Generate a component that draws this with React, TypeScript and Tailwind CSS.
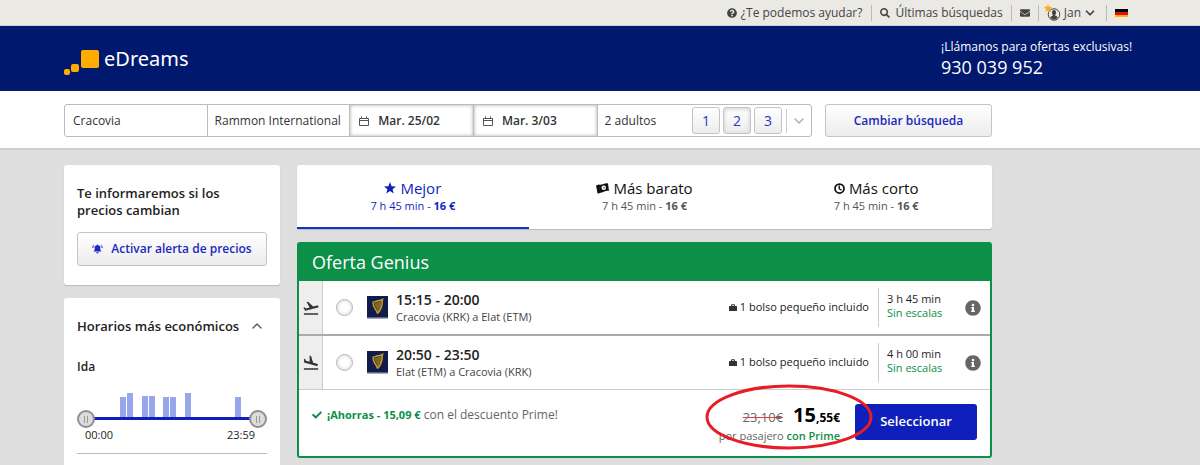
import clsx from "clsx";
import { useState } from "react";
import {
  FaCheck,
  FaEnvelope,
  FaInfoCircle,
  FaQuestionCircle,
  FaSearch,
} from "react-icons/fa";
import { LuChevronDown, LuChevronUp } from "react-icons/lu";
import { MdFlightLand, MdFlightTakeoff } from "react-icons/md";

const legs = [
  {
    id: "out",
    Icon: MdFlightTakeoff,
    hours: "15:15 - 20:00",
    route: "Cracovia (KRK) a Elat (ETM)",
    duration: "3 h 45 min",
  },
  {
    id: "back",
    Icon: MdFlightLand,
    hours: "20:50 - 23:50",
    route: "Elat (ETM) a Cracovia (KRK)",
    duration: "4 h 00 min",
  },
];

const tabs = [
  { title: "Mejor", Icon: StarIcon },
  { title: "Más barato", Icon: MoneyIcon },
  { title: "Más corto", Icon: ClockIcon },
];

// one entry per hour of the day, height in pixels
const hourBars = [
  0, 0, 0, 0, 0, 0, 20, 24, 0, 21, 21, 0, 20, 20, 0, 24, 0, 0, 0, 0, 0, 0, 20,
  0,
];

const thumb =
  "pointer-events-none absolute inset-x-0 bottom-0 h-[18px] w-full appearance-none bg-transparent [&::-webkit-slider-thumb]:pointer-events-auto [&::-webkit-slider-thumb]:size-[18px] [&::-webkit-slider-thumb]:appearance-none [&::-webkit-slider-thumb]:rounded-full [&::-webkit-slider-thumb]:border-2 [&::-webkit-slider-thumb]:border-[#8f8f8f] [&::-webkit-slider-thumb]:bg-[#dcdcdc] [&::-webkit-slider-thumb]:bg-[linear-gradient(90deg,#999_1px,transparent_1px,transparent_3px,#999_3px)] [&::-webkit-slider-thumb]:bg-[size:4px_7px] [&::-webkit-slider-thumb]:bg-center [&::-webkit-slider-thumb]:bg-no-repeat";

const lightButton =
  "rounded-[3px] border border-[#c4c4c4] bg-linear-to-b from-white to-[#ececec]";

function StarIcon() {
  return (
    <svg viewBox="0 0 24 24" className="size-3" fill="currentColor">
      <path d="M12 0l3.2 8.4L24 8.9l-6.9 5.600L19.400 23 12 18.200 4.600 23l2.300-8.500L0 8.900l8.800-.5z" />
    </svg>
  );
}

function MoneyIcon() {
  return (
    <svg viewBox="0 0 26 22" className="h-[11px] w-[13px]">
      <path d="M0 5l6-2 3 17-6 1z" fill="#111" />
      <path
        d="M5 3c4 1 7 0 10-1s6-2 9-1l2 15c-4-1-6 0-9 1s-6 3-9 2z"
        fill="#111"
      />
      <ellipse cx="15.500" cy="9.500" rx="4.500" ry="4.500" fill="#fff" />
      <circle cx="16" cy="9.500" r="1.300" fill="#111" />
    </svg>
  );
}

function ClockIcon() {
  return (
    <svg
      viewBox="0 0 22 22"
      className="size-[11px]"
      fill="none"
      stroke="#111"
      strokeWidth="3.500"
    >
      <circle cx="11" cy="11" r="9" />
      <path d="M10.500 5v6.500l4.500 3" strokeWidth="2.800" />
    </svg>
  );
}

function BellIcon() {
  return (
    <svg viewBox="0 0 22 20" className="h-[10px] w-[11px]" fill="currentColor">
      <path d="M9.500 2.500a1.500 1.500 0 013 0c3 .8 4 3 4 6 0 3 .5 4.500 2.500 6.500H3c2-2 2.500-3.500 2.500-6.500 0-3 1-5.200 4-6z" />
      <path d="M8.500 16.500h5a2.500 2.500 0 01-5 0z" />
      <path
        d="M1 8c0-3 1-5 3-6.500M21 8c0-3-1-5-3-6.500M3.500 8c0-2 .5-3 1.800-4.300M18.500 8c0-2-.5-3-1.800-4.300"
        fill="none"
        stroke="currentColor"
        strokeWidth="1.300"
      />
    </svg>
  );
}

function CalendarIcon() {
  return (
    <svg
      viewBox="0 0 10 10"
      className="size-[10px] shrink-0"
      fill="none"
      stroke="#555"
    >
      <path d="M.5 2.500h9v7h-9zM.5 4.500h9M2.500 2.500v-2M7.500 2.500v-2" />
    </svg>
  );
}

function BagIcon() {
  return (
    <svg viewBox="0 0 16 14" className="h-[7px] w-2" fill="#333">
      <path d="M1 4h14a1 1 0 011 1v8a1 1 0 01-1 1H1a1 1 0 01-1-1V5a1 1 0 011-1z" />
      <path d="M5 4V1.500h6V4" fill="none" stroke="#333" strokeWidth="2" />
    </svg>
  );
}

function UserIcon() {
  return (
    <svg viewBox="0 0 36 36" className="size-[18px]">
      <circle
        cx="20"
        cy="21"
        r="11.500"
        fill="#ebe9e4"
        stroke="#444"
        strokeWidth="2"
      />
      <path
        d="M20 12c3 0 4 2 4 5s-1 4-2 6c3 1 5 2 5 4-1 3-4 4-7 4s-6-1-7-4c0-2 2-3 5-4-1-2-2-3-2-6s1-5 4-5z"
        fill="#444"
      />
      <path
        d="M8 0l2.200 5.500 6.300.8-4.600 4 1.600 6.200L8 13l-5.500 3.500 1.600-6.200-4.600-4 6.300-.8z"
        fill="#fcae1e"
      />
    </svg>
  );
}

function HarpLogo() {
  return (
    <svg viewBox="0 0 42 46" className="h-[23px] w-[21px]">
      <path d="M0 0h42v46H0z" fill="#a9acb8" />
      <path d="M0 0h42v43H0z" fill="#0f1c4d" />
      <path d="M14 14l16-4-2 13-7 10c0-7-5-11-7-19z" fill="#7d662a" />
      <path
        d="M11 12c4 1 7-2 11-2.500 3 0 5-.5 9-2.500-1 3 0 6-1 10-1 8-4 13-9 18M12 13c0 5 1 8 4 12 2 3 4 6 5 10"
        fill="none"
        stroke="#d29c22"
        strokeWidth="2.800"
      />
    </svg>
  );
}

function TopBar() {
  return (
    <nav className="border-b border-[#cfced0] bg-[#ebe9e4] text-xs text-[#444]">
      <div className="mx-auto flex h-[25px] max-w-[1072px] items-center justify-end pr-2">
        <a href="#ayuda" className="flex items-center gap-1 pr-[9px]">
          <FaQuestionCircle className="size-[10px]" />
          ¿Te podemos ayudar?
        </a>
        <a
          href="#busquedas"
          className="flex h-4 items-center gap-[5px] border-l border-[#bbb] px-2"
        >
          <FaSearch className="size-[10px]" />
          Últimas búsquedas
        </a>
        <a
          href="#mensajes"
          aria-label="Mensajes"
          className="flex h-4 items-center border-l border-[#bbb] px-2"
        >
          <FaEnvelope className="size-[10px]" />
        </a>
        <button
          type="button"
          className="flex h-4 items-center gap-[2px] border-l border-[#bbb] pr-[9px] pl-[5px]"
        >
          <UserIcon />
          Jan
          <LuChevronDown className="size-[14px]" strokeWidth={3} />
        </button>
        <button
          type="button"
          aria-label="Idioma"
          className="flex h-4 items-center border-l border-[#bbb] pl-2"
        >
          <svg viewBox="0 0 13 8" className="h-2 w-[13px]">
            <path d="M0 0h13v3H0z" />
            <path d="M0 3h13v3H0z" fill="#dd1111" />
            <path d="M0 6h13v2H0z" fill="#fcb500" />
          </svg>
        </button>
      </div>
    </nav>
  );
}

function Header() {
  return (
    <header className="bg-[#00186e] text-white">
      <div className="mx-auto flex h-[65px] max-w-[1072px] items-center justify-between">
        <a href="#inicio" className="flex items-center gap-[5px]">
          <svg viewBox="0 0 35 32" className="h-8 w-[35px]" fill="#ffab00">
            <rect x="17" y="7" width="18" height="18" rx="2" />
            <rect x="7" y="21" width="8" height="8" rx="2" />
            <rect x="0" y="26" width="6" height="6" rx="2" />
          </svg>
          <span className="font-['Noto_Sans',sans-serif] text-xl leading-6">
            eDreams
          </span>
        </a>
        <div className="w-[195px]">
          <p className="text-xs leading-4">¡Llámanos para ofertas exclusivas!</p>
          <p className="text-lg leading-6">930 039 952</p>
        </div>
      </div>
    </header>
  );
}

function DateField({ value, label }: { value: string; label: string }) {
  return (
    <button
      type="button"
      aria-label={label}
      className="flex items-center gap-[9px] border-l border-[#bbb] px-[9px] font-semibold shadow-[inset_0_0_3px_1px_#ccc]"
    >
      <CalendarIcon />
      {value}
    </button>
  );
}

function SearchForm() {
  const [adults, setAdults] = useState(2);

  return (
    <div className="border-b-2 border-[#cfcfcf] bg-white">
      <div className="mx-auto max-w-[1072px] pt-[13px] pb-[11px]">
        <form className="grid max-w-[928px] grid-cols-[748fr_167fr] gap-[13px]">
          <div className="grid h-[33px] grid-cols-[142fr_143fr_124fr_124fr_215fr] rounded-[3px] border border-[#bbb] text-xs text-[#333]">
            <input
              aria-label="Origen"
              defaultValue="Cracovia"
              className="min-w-0 px-2 outline-none"
            />
            <input
              aria-label="Destino"
              defaultValue="Rammon International"
              className="min-w-0 border-l border-[#bbb] pl-[7px] outline-none"
            />
            <DateField label="Ida" value="Mar. 25/02" />
            <DateField label="Vuelta" value="Mar. 3/03" />
            <div className="flex items-center border-l border-[#bbb] pl-[7px]">
              <span className="flex-1">{adults} adultos</span>
              <div className="flex gap-[3px]">
                {[1, 2, 3].map((n) => (
                  <button
                    key={n}
                    type="button"
                    onClick={() => setAdults(n)}
                    className={clsx(
                      "h-[27px] w-7 text-sm text-[#2a38c4]",
                      lightButton,
                      n === adults && "shadow-[inset_0_1px_4px_#ccc]",
                    )}
                  >
                    {n}
                  </button>
                ))}
              </div>
              <button
                type="button"
                aria-label="Más pasajeros"
                className="ml-1 flex h-6 items-center border-l border-[#ccc] px-1 text-[#aaa]"
              >
                <LuChevronDown className="size-4" />
              </button>
            </div>
          </div>
          <button
            type="button"
            className={clsx(
              "h-[33px] text-xs font-semibold text-[#1a28bf]",
              lightButton,
            )}
          >
            Cambiar búsqueda
          </button>
        </form>
      </div>
    </div>
  );
}

function Sidebar() {
  return (
    <aside className="flex w-[216px] shrink-0 flex-col gap-[13px] text-[#222]">
      <section className="rounded-[3px] bg-white px-[13px] pt-5 pb-[19px] shadow-[0_1px_1px_#bbb]">
        <h2 className="text-[13px] leading-[17px] font-semibold">
          Te informaremos si los precios cambian
        </h2>
        <button
          type="button"
          className={clsx(
            "mt-[13px] flex h-[34px] w-full items-center justify-center gap-2 text-xs font-semibold text-[#1a28bf]",
            lightButton,
          )}
        >
          <BellIcon />
          Activar alerta de precios
        </button>
      </section>

      <section className="rounded-t-[3px] bg-white px-[13px] pt-5">
        <button
          type="button"
          className="flex w-full items-center justify-between pr-[2px] text-[13px] leading-4 font-semibold"
        >
          Horarios más económicos
          <LuChevronUp className="size-4 text-[#555]" />
        </button>
        <h3 className="mt-[25px] text-xs leading-4 font-semibold">Ida</h3>
        <div className="relative mt-[14px] pb-2">
          <div className="mr-[18px] flex h-7 items-end">
            {hourBars.map((height, hour) => (
              <div key={hour} className="flex-1 pr-px">
                <div className="bg-[#98a6ec]" style={{ height }} />
              </div>
            ))}
          </div>
          <div className="mx-[9px] h-[3px] bg-[#0f1fbb]" />
          <input
            type="range"
            aria-label="Salida desde"
            min={0}
            max={1439}
            defaultValue={0}
            className={thumb}
          />
          <input
            type="range"
            aria-label="Salida hasta"
            min={0}
            max={1439}
            defaultValue={1439}
            className={thumb}
          />
        </div>
        <div className="flex justify-between px-2 pr-3 text-[11px] leading-[14px]">
          <span>00:00</span>
          <span>23:59</span>
        </div>
        <div className="mt-[11px] h-5 border-t border-[#bbb]" />
      </section>
    </aside>
  );
}

function SortTabs() {
  const [active, setActive] = useState("Mejor");

  return (
    <div
      role="tablist"
      className="flex rounded-[3px] bg-white shadow-[0_1px_1px_#bbb]"
    >
      {tabs.map(({ title, Icon }) => (
        <button
          key={title}
          type="button"
          role="tab"
          aria-selected={title === active}
          onClick={() => setActive(title)}
          className={clsx(
            "flex-1 border-b-2 pt-[13px] pb-[13px]",
            title === active
              ? "border-[#1a2fc4] text-[#0f1fbb]"
              : "border-transparent text-[#555]",
          )}
        >
          <span
            className={clsx(
              "flex items-center justify-center gap-1 text-[15px] leading-5",
              title !== active && "text-[#111]",
            )}
          >
            <Icon />
            {title}
          </span>
          <span className="block text-[11px] leading-4">
            7 h 45 min - <b className="font-bold">16 €</b>
          </span>
        </button>
      ))}
    </div>
  );
}

function Leg({ leg }: { leg: (typeof legs)[number] }) {
  return (
    <div className="flex h-[53px] items-stretch">
      <div className="flex w-6 items-center justify-center border-r border-[#ccc] bg-[#eee]">
        <leg.Icon className="size-[18px] text-[#333]" />
      </div>
      <label className="flex flex-1 items-center pl-[13px]">
        <input
          type="radio"
          name={leg.id}
          className="size-[17px] appearance-none rounded-full border border-[#b5b5b5] bg-white shadow-[inset_0_0_3px_1px_#ddd] checked:bg-[#0f1fbb]"
        />
        <span className="mr-2 ml-[14px]">
          <HarpLogo />
        </span>
        <span>
          <span className="block text-sm leading-[18px] font-semibold text-[#222]">
            {leg.hours}
          </span>
          <span className="block text-[11px] leading-4 text-[#444]">
            {leg.route}
          </span>
        </span>
      </label>
      <span className="flex items-center gap-[3px] pr-[9px] text-[11px] text-[#222]">
        <BagIcon />1 bolso pequeño incluido
      </span>
      <div className="my-[7px] w-[87px] border-l border-[#ccc] pt-1 pl-2 text-[11px] leading-[14px]">
        <p className="text-[#222]">{leg.duration}</p>
        <p className="text-[#0c8f47]">Sin escalas</p>
      </div>
      <button type="button" aria-label="Información" className="pr-[9px]">
        <FaInfoCircle className="size-4 text-[#666]" />
      </button>
    </div>
  );
}

function Offer() {
  return (
    <section className="rounded-[3px] border-2 border-[#0c8f47] bg-white">
      <h2 className="bg-[#0c8f47] pl-[13px] text-lg leading-[37px] text-white">
        Oferta Genius
      </h2>
      <Leg leg={legs[0]} />
      <div className="h-[2px] bg-[#aaa]" />
      <Leg leg={legs[1]} />
      <div className="flex h-[67px] items-start border-t border-[#ccc] pr-[13px]">
        <p className="flex flex-1 items-center gap-[5px] pt-[17px] pl-[13px] text-xs leading-4 text-[#666]">
          <FaCheck className="size-[10px] text-[#0c8f47]" />
          <span>
            <b className="text-[11px] text-[#0c8f47]">¡Ahorras - 15,09 €</b>{" "}
            con el descuento Prime!
          </span>
        </p>
        <div className="relative pt-[13px] pr-[15px] text-right">
          <p className="leading-6">
            <s className="mr-[10px] text-[13px] text-[#666] decoration-[#d8454f]">
              23,10€
            </s>
            <b className="text-xl leading-6 text-black">
              15<span className="text-xs">,55€</span>
            </b>
          </p>
          <p className="text-[11px] leading-[14px] text-[#666]">
            por pasajero{" "}
            <b className="font-semibold text-[#0c8f47]">con Prime</b>
          </p>
          <svg
            viewBox="0 0 170 68"
            className="pointer-events-none absolute -top-[7px] -right-[19px] h-[68px] w-[170px]"
            fill="none"
            stroke="#e81c24"
            strokeWidth="3"
          >
            <ellipse cx="85" cy="34" rx="82" ry="31" />
          </svg>
        </div>
        <button
          type="button"
          className="mt-[14px] h-9 w-[122px] rounded-[3px] bg-[#0f1fbb] text-[13px] font-semibold text-white"
        >
          Seleccionar
        </button>
      </div>
    </section>
  );
}

export default function App() {
  return (
    <div className="min-h-screen bg-[#dedede] font-['Open_Sans',sans-serif]">
      <TopBar />
      <Header />
      <SearchForm />
      <div className="mx-auto max-w-[1072px] pt-[15px]">
        <div className="flex max-w-[928px] gap-[17px]">
          <Sidebar />
          <main className="flex flex-1 flex-col gap-[13px]">
            <SortTabs />
            <Offer />
          </main>
        </div>
      </div>
    </div>
  );
}
